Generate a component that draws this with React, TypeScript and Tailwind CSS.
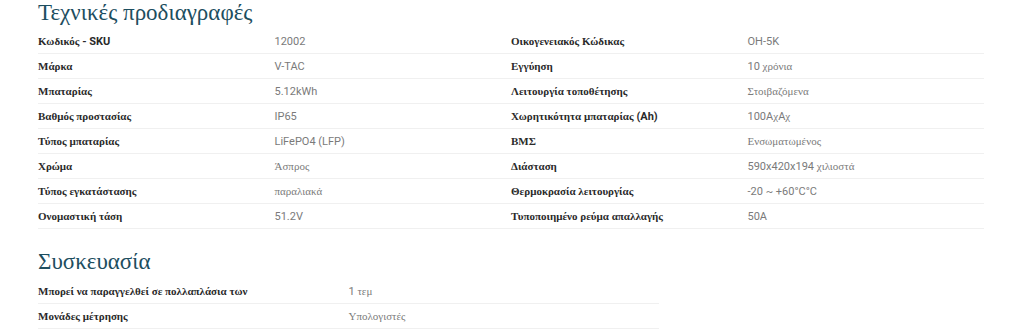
import React from 'react';

const GREEK_RUN = /([\u0370-\u03FF\u1F00-\u1FFF]+(?:\s+[\u0370-\u03FF\u1F00-\u1FFF]+)*)/;

// The shop font has no Greek glyphs, so Greek falls back to a serif face.
const Mixed: React.FC<{ text: string }> = ({ text }) => (
  <>
    {text.split(GREEK_RUN).map((part, i) =>
      part === '' ? null : GREEK_RUN.test(part) ? (
        <span key={i} className="font-['Liberation_Serif',serif]">
          {part}
        </span>
      ) : (
        <span key={i} className="font-['Roboto',sans-serif]">
          {part}
        </span>
      ),
    )}
  </>
);

const specs: [string, string][] = [
  ['Κωδικός - SKU', '12002'],
  ['Οικογενειακός Κώδικας', 'OH-5K'],
  ['Μάρκα', 'V-TAC'],
  ['Εγγύηση', '10 χρόνια'],
  ['Μπαταρίας', '5.12kWh'],
  ['Λειτουργία τοποθέτησης', 'Στοιβαζόμενα'],
  ['Βαθμός προστασίας', 'IP65'],
  ['Χωρητικότητα μπαταρίας (Ah)', '100AχAχ'],
  ['Τύπος μπαταρίας', 'LiFePO4 (LFP)'],
  ['ΒΜΣ', 'Ενσωματωμένος'],
  ['Χρώμα', 'Άσπρος'],
  ['Διάσταση', '590x420x194 χιλιοστά'],
  ['Τύπος εγκατάστασης', 'παραλιακά'],
  ['Θερμοκρασία λειτουργίας', '-20 ~ +60°C°C'],
  ['Ονομαστική τάση', '51.2V'],
  ['Τυποποιημένο ρεύμα απαλλαγής', '50A'],
];

const packaging: [string, string][] = [
  ['Μπορεί να παραγγελθεί σε πολλαπλάσια των', '1 τεμ'],
  ['Μονάδες μέτρησης', 'Υπολογιστές'],
];

const SpecRow: React.FC<{ label: string; value: string }> = ({ label, value }) => (
  <div className="grid grid-cols-2 h-[25px] items-center border-b border-[#f0f0f0] text-[11px] leading-none">
    <div className="font-bold text-[#2a2a2a]">
      <Mixed text={label} />
    </div>
    <div className="text-[#7a7a7a]">
      <Mixed text={value} />
    </div>
  </div>
);

export default function App() {
  return (
    <div className="bg-white w-[1024px] h-[333px] overflow-hidden pl-[38px]">
      <h2 className="font-['Liberation_Serif',serif] text-[23px] leading-none text-[#1d4e5f] pt-px h-[29px]">
        Τεχνικές προδιαγραφές
      </h2>
      <div className="grid grid-cols-2 w-[946px]">
        {specs.map(([l, v]) => (
          <SpecRow key={l} label={l} value={v} />
        ))}
      </div>
      <h2 className="font-['Liberation_Serif',serif] text-[23px] leading-none text-[#1d4e5f] pt-[21px] h-[50px]">
        Συσκευασία
      </h2>
      <div className="w-[621px]">
        {packaging.map(([l, v]) => (
          <SpecRow key={l} label={l} value={v} />
        ))}
      </div>
    </div>
  );
}
